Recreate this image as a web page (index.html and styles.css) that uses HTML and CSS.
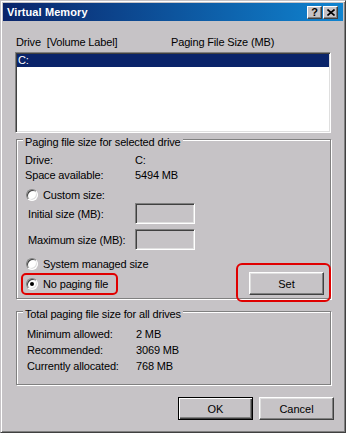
FILE: index.html
```html
<!DOCTYPE html>
<html lang="en">
<head>
<meta charset="UTF-8">
<meta name="viewport" content="width=device-width, initial-scale=1.0">
<title>Virtual Memory</title>
<link rel="stylesheet" href="styles.css">
</head>
<body>
<div class="window">
    <div class="titlebar">
        <span class="title">Virtual Memory</span>
        <div class="caption-btns">
            <button class="cap-btn help">?</button>
            <button class="cap-btn close">
                <svg width="8" height="7" viewBox="0 0 8 7"><path d="M0.5 0.5 L7.5 6.5 M7.5 0.5 L0.5 6.5" stroke="#000" stroke-width="1.6" fill="none"/></svg>
            </button>
        </div>
    </div>
    <div class="dlg">
        <div class="list-head">
            <span class="col-drive">Drive&nbsp; [Volume Label]</span>
            <span>Paging File Size (MB)</span>
        </div>
        <div class="listbox">
            <div class="list-row selected">C:</div>
        </div>

        <div class="group group-drive">
            <div class="group-title">Paging file size for selected drive</div>
            <div class="info">
                <span>Drive:</span><span>C:</span>
                <span>Space available:</span><span>5494 MB</span>
            </div>
            <label class="radio custom"><span class="radio-dot"></span>Custom size:</label>
            <div class="size-row first">
                <span>Initial size (MB):</span>
                <input class="edit" type="text" disabled>
            </div>
            <div class="size-row">
                <span>Maximum size (MB):</span>
                <input class="edit" type="text" disabled>
            </div>
            <label class="radio system"><span class="radio-dot"></span>System managed size</label>
            <div class="set-row">
                <label class="radio mark-radio"><span class="radio-dot checked"></span>No paging file</label>
                <div class="mark-set"><button class="btn">Set</button></div>
            </div>
        </div>

        <div class="group group-total">
            <div class="group-title">Total paging file size for all drives</div>
            <div class="totals">
                <span>Minimum allowed:</span><span>2 MB</span>
                <span>Recommended:</span><span>3069 MB</span>
                <span>Currently allocated:</span><span>768 MB</span>
            </div>
        </div>

        <div class="footer">
            <button class="btn default">OK</button>
            <button class="btn">Cancel</button>
        </div>
    </div>
</div>
</body>
</html>
```

FILE: styles.css
```css
body {
    margin: 0;
    font-family: "Liberation Sans", Arial, sans-serif;
    font-size: 11px;
    letter-spacing: -0.15px;
    color: #000;
    background: #c6c3c6;
}
.window {
    width: 346px;
    height: 433px;
    box-sizing: border-box;
    background: #c6c3c6;
    border: 1px solid;
    border-color: #c6c3c6 #404040 #404040 #c6c3c6;
    box-shadow: inset 1px 1px #fff, inset -1px -1px #808080;
    padding: 2px;
}
.titlebar {
    height: 18px;
    display: flex;
    align-items: center;
    justify-content: space-between;
    padding-left: 4px;
    background: linear-gradient(to right, #0a246a, #1084d0);
}
.title {
    color: #fff;
    font-weight: bold;
    font-size: 11px;
    letter-spacing: 0.1px;
}
.caption-btns {
    display: flex;
    gap: 1px;
    margin-right: 5px;
}
.cap-btn {
    width: 15px;
    height: 13px;
    padding: 0;
    box-sizing: border-box;
    background: #c6c3c6;
    border: 1px solid;
    border-color: #fff #404040 #404040 #fff;
    box-shadow: inset -1px -1px #808080;
    display: flex;
    align-items: center;
    justify-content: center;
    font-family: "Liberation Sans", Arial, sans-serif;
    font-weight: bold;
    font-size: 11px;
    line-height: 11px;
    color: #000;
}
.cap-btn svg {
    display: block;
}

.dlg {
    padding: 15px 12px 0 12px;
}
.list-head {
    display: flex;
    height: 13px;
    line-height: 13px;
    padding-left: 1px;
}
.col-drive {
    width: 155px;
}
.listbox {
    margin-top: 3px;
    height: 81px;
    box-sizing: border-box;
    padding: 1px;
    background: #fff;
    border: 1px solid;
    border-color: #808080 #fff #fff #808080;
    box-shadow: inset 1px 1px #404040, inset -1px -1px #dfdfdf;
}
.list-row {
    height: 13px;
    line-height: 13px;
    padding-left: 1px;
}
.list-row.selected {
    background: #0a246a;
    color: #fff;
}

.group {
    margin-left: 1px;
    border: 1px solid #808080;
    box-shadow: inset 1px 1px #fff, 1px 1px #fff;
}
.group-drive {
    margin-top: 6px;
    padding: 0 6px 3px 8px;
}
.group-total {
    margin-top: 12px;
    padding: 0 6px 10px 8px;
}
.group-title {
    width: fit-content;
    margin: -4px 0 0 -2px;
    padding: 0 2px;
    height: 13px;
    line-height: 13px;
    background: #c6c3c6;
}
.info {
    margin-top: 4px;
    display: grid;
    grid-template-columns: 110px auto;
    grid-auto-rows: 15px;
    line-height: 15px;
}
.radio {
    display: flex;
    align-items: center;
    height: 15px;
    margin-left: 1px;
}
.radio.custom {
    margin-top: 4px;
}
.radio.system {
    margin-top: 6px;
}
.radio-dot {
    width: 12px;
    height: 12px;
    box-sizing: border-box;
    margin-right: 5px;
    border-radius: 50%;
    background: #fff;
    border: 1px solid;
    border-color: #808080 #fff #fff #808080;
    box-shadow: inset 1px 1px #404040, inset -1px -1px #dfdfdf;
    display: flex;
    align-items: center;
    justify-content: center;
}
.radio-dot.checked::after {
    content: "";
    width: 4px;
    height: 4px;
    border-radius: 50%;
    background: #000;
}
.size-row {
    display: grid;
    grid-template-columns: 110px 60px;
    align-items: center;
    height: 21px;
    margin-top: 5px;
}
.size-row.first {
    margin-top: 1px;
}
.size-row span {
    padding-left: 3px;
}
.edit {
    width: 60px;
    height: 21px;
    box-sizing: border-box;
    margin: 0;
    padding: 0;
    background: #c6c3c6;
    border: 1px solid;
    border-color: #808080 #fff #fff #808080;
    box-shadow: inset 1px 1px #404040, inset -1px -1px #dfdfdf;
}
.set-row {
    margin-top: 1px;
    height: 23px;
    display: flex;
    align-items: center;
    justify-content: space-between;
}
.mark-radio {
    width: 97px;
    height: 22px;
    box-sizing: border-box;
    margin-left: -4px;
    padding-left: 3px;
    border: 2px solid #e00000;
    border-radius: 5px;
}
.mark-set {
    margin: -9px -7px -7px -13px;
    padding: 7px 5px 5px 11px;
    border: 2px solid #e00000;
    border-radius: 6px;
}
.btn {
    display: block;
    width: 75px;
    height: 23px;
    box-sizing: border-box;
    padding: 0;
    background: #c6c3c6;
    font-family: "Liberation Sans", Arial, sans-serif;
    font-size: 11px;
    color: #000;
    border: 1px solid;
    border-color: #fff #404040 #404040 #fff;
    box-shadow: inset -1px -1px #808080, inset 1px 1px #dfdfdf;
}
.btn.default {
    border-color: #000;
    box-shadow: inset 1px 1px #fff, inset -1px -1px #404040, inset -2px -2px #808080;
}
.totals {
    margin: 5px 0 0 2px;
    display: grid;
    grid-template-columns: 109px auto;
    grid-auto-rows: 16px;
    line-height: 16px;
}
.footer {
    margin: 12px -3px 0 0;
    display: flex;
    justify-content: flex-end;
    gap: 6px;
}
```
